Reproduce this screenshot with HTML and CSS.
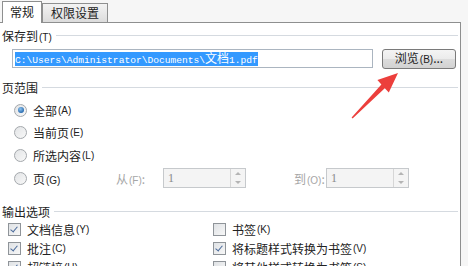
FILE: index.html
```html
<!DOCTYPE html>
<html lang="zh-CN">
<head>
  <meta charset="UTF-8">
  <title>常规</title>
  <link rel="stylesheet" href="styles.css">
</head>
<body>

  <div class="tabs">
    <div class="tab active">常规</div>
    <div class="tab">权限设置</div>
  </div>

  <div class="pane">
    <div class="group-title"><span>保存到<span class="key">(T)</span></span></div>
    <div class="save-row">
      <div class="path"><span class="sel">C:\Users\Administrator\Documents\<span class="cjk">文档</span>1.pdf</span></div>
      <button class="btn">浏览<span class="key">(B)</span>...</button>
    </div>

    <div class="group-title"><span>页范围</span></div>
    <div class="radios">
      <div class="radio-row"><span class="dot on"></span>全部<span class="key">(A)</span></div>
      <div class="radio-row"><span class="dot"></span>当前页<span class="key">(E)</span></div>
      <div class="radio-row"><span class="dot"></span>所选内容<span class="key">(L)</span></div>
      <div class="radio-row">
        <span class="dot"></span><span class="page-label">页<span class="key">(G)</span></span>
        <span class="rlabel from">从<span class="key">(F)</span>:</span>
        <div class="spin"><span>1</span><div class="spin-btns"><i class="up"></i><i class="down"></i></div></div>
        <span class="rlabel to">到<span class="key">(O)</span>:</span>
        <div class="spin"><span>1</span><div class="spin-btns"><i class="up"></i><i class="down"></i></div></div>
      </div>
    </div>

    <div class="group-title"><span>输出选项</span></div>
    <div class="checks">
      <div class="check-row"><span class="box on"></span>文档信息<span class="key">(Y)</span></div>
      <div class="check-row"><span class="box"></span>书签<span class="key">(K)</span></div>
      <div class="check-row"><span class="box on"></span>批注<span class="key">(C)</span></div>
      <div class="check-row"><span class="box on"></span>将标题样式转换为书签<span class="key">(V)</span></div>
      <div class="check-row"><span class="box on"></span>超链接<span class="key">(H)</span></div>
      <div class="check-row"><span class="box"></span>将其他样式转换为书签<span class="key">(S)</span></div>
    </div>
  </div>

  <svg class="arrow" width="468" height="266" viewBox="0 0 468 266">
    <polygon points="351.6,117.4 381.4,84.4 377.4,80.0 398,73 388.8,92.6 384.8,88.2 352.6,118.6" fill="#ec3f3c"/>
  </svg>

</body>
</html>
```

FILE: styles.css
```css
body {
  margin: 0;
  width: 468px;
  height: 266px;
  overflow: hidden;
  position: relative;
  background: #f6f6f6;
  font-family: "Noto Sans CJK SC", sans-serif;
  font-size: 12px;
  color: #222;
}
.key {
  font-family: "Liberation Sans", sans-serif;
  font-size: 10px;
  margin-left: 1px;
}
.tabs {
  display: flex;
  align-items: flex-end;
  height: 22px;
  padding-left: 2px;
}
.tab {
  height: 18px;
  line-height: 18px;
  padding: 0 8px;
  border: 1px solid #8e8f8f;
  border-bottom: none;
  background: linear-gradient(#f3f3f3, #dcdcdc);
  box-sizing: content-box;
}
.tab.active {
  height: 21px;
  line-height: 20px;
  padding: 0 7px;
  background: #fff;
  position: relative;
  z-index: 1;
  margin-bottom: -1px;
}
.pane {
  width: 460px;
  height: 243px;
  background: #fff;
  border: 1px solid #8e8f8f;
  border-left: none;
  overflow: hidden;
}
.group-title {
  display: flex;
  align-items: center;
  gap: 4px;
  height: 14px;
  padding-left: 2px;
  margin-right: 2px;
  margin-top: 11px;
}
.group-title:first-child {
  margin-top: 5px;
}
.group-title::after {
  content: "";
  flex: 1;
  height: 1px;
  background: #d5dae0;
}
.save-row {
  display: flex;
  align-items: flex-start;
  margin-top: 7px;
  padding-left: 12px;
}
.path {
  width: 361px;
  height: 19px;
  box-sizing: border-box;
  border: 1px solid #abb5c0;
  padding-left: 2px;
  display: flex;
  align-items: center;
}
.sel {
  background: #3399ff;
  color: #fff;
  font-family: "Liberation Mono", monospace;
  font-size: 9.6px;
  line-height: 11px;
  white-space: nowrap;
}
.sel .cjk {
  font-family: "Noto Sans CJK SC", sans-serif;
  font-size: 12px;
}
.btn {
  margin-left: 9px;
  width: 74px;
  height: 20px;
  padding: 0;
  border: 1px solid #7a7a7a;
  border-radius: 3px;
  background: linear-gradient(#f4f4f4 0%, #ebebeb 50%, #dcdcdc 51%, #d2d2d2 100%);
  font-family: "Noto Sans CJK SC", sans-serif;
  font-size: 12px;
  color: #222;
  line-height: 16px;
}
.radios {
  margin-top: 5px;
  padding-left: 14px;
}
.radio-row {
  display: flex;
  align-items: center;
  height: 22.67px;
}
.dot {
  width: 11px;
  height: 11px;
  border: 1px solid #a4a8ac;
  border-radius: 50%;
  background: linear-gradient(135deg, #e2e4e6, #f8f8f8);
  margin-right: 6px;
  position: relative;
}
.dot.on::after {
  content: "";
  position: absolute;
  left: 2.5px;
  top: 2.5px;
  width: 6px;
  height: 6px;
  border-radius: 50%;
  background: radial-gradient(circle at 40% 35%, #8ec4f0, #2a6cb0 70%);
}
.page-label {
  width: 83px;
}
.rlabel {
  color: #a6a6a6;
}
.rlabel.from {
  width: 47px;
}
.rlabel.to {
  width: 32px;
  margin-left: 48px;
}
.spin {
  width: 83px;
  height: 20px;
  box-sizing: border-box;
  border: 1px solid #c6c9cc;
  background: #f4f4f4;
  display: flex;
  align-items: center;
  justify-content: space-between;
  padding-left: 4px;
  color: #8a8a8a;
  font-family: "Liberation Serif", serif;
  font-size: 12px;
}
.spin-btns {
  width: 14px;
  height: 18px;
  border-left: 1px solid #d6d6d6;
  display: flex;
  flex-direction: column;
  align-items: center;
  justify-content: space-around;
}
.spin-btns i {
  width: 0;
  height: 0;
  border-left: 3px solid transparent;
  border-right: 3px solid transparent;
}
.spin-btns .up {
  border-bottom: 3px solid #b4b4b4;
}
.spin-btns .down {
  border-top: 3px solid #b4b4b4;
}
.group-title.out {
  margin-top: 15px;
}
.radios + .group-title {
  margin-top: 15px;
}
.checks {
  display: grid;
  grid-template-columns: 205px 1fr;
  grid-auto-rows: 19px;
  margin-top: 1px;
  padding-left: 8px;
}
.check-row {
  display: flex;
  align-items: center;
  white-space: nowrap;
}
.box {
  width: 11px;
  height: 11px;
  border: 1px solid #8f9499;
  background: linear-gradient(135deg, #dfe2e5, #f7f7f7);
  margin-right: 6px;
  position: relative;
}
.box.on::after {
  content: "";
  position: absolute;
  left: 3px;
  top: 1px;
  width: 3px;
  height: 6px;
  border-right: 1.5px solid #4a6a9a;
  border-bottom: 1.5px solid #4a6a9a;
  transform: rotate(40deg);
}
.arrow {
  position: absolute;
  left: 0;
  top: 0;
  pointer-events: none;
}
```
